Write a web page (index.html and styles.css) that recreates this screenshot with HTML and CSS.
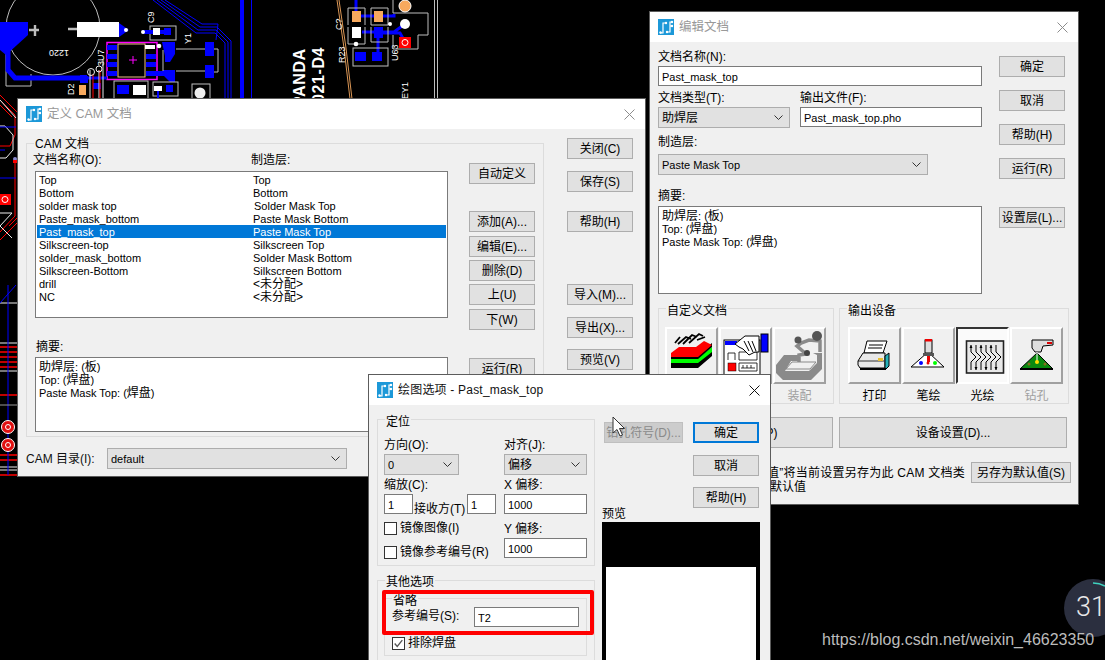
FILE: index.html
```html
<!DOCTYPE html>
<html lang="zh">
<head>
<meta charset="utf-8">
<title>CAM</title>
<link rel="stylesheet" href="styles.css">
</head>
<body>
<svg class="defs" width="0" height="0">
  <symbol id="logo" viewBox="0 0 16 16">
    <rect width="16" height="16" fill="#1c98d8"/>
    <path d="M2 14h3V4h2M9 13h3V3h2M3 14v-1M12 7h2" fill="none" stroke="#fff" stroke-width="1.2"/>
    <circle cx="2.5" cy="13.5" r="1.2" fill="#fff"/><circle cx="8" cy="4" r="1.2" fill="#fff"/>
    <circle cx="9" cy="13" r="1.2" fill="#fff"/><circle cx="14" cy="3" r="1.2" fill="#fff"/>
    <circle cx="14" cy="7" r="1.2" fill="#fff"/>
  </symbol>
  <symbol id="chev" viewBox="0 0 9 5">
    <path d="M.5.5 4.5 4.5 8.5.5" fill="none" stroke="#333" stroke-width="1"/>
  </symbol>
  <symbol id="cross" viewBox="0 0 11 11">
    <path d="M.5.5 10.5 10.5M10.5.5.5 10.5" fill="none" stroke="currentColor" stroke-width="1"/>
  </symbol>
</svg>

<div class="desk">
  <svg class="pcb" width="1105" height="660" viewBox="0 0 1105 660">
    <!-- battery area -->
    <circle cx="53" cy="28" r="47" fill="none" stroke="#bdbdbd"/>
    <path d="M6 30V86H31V74" fill="none" stroke="#bdbdbd"/>
    <path d="M0 22H28V35L6 55 0 50Z" fill="#0000ff"/>
    <path d="M8 50V70L15 78H84" fill="none" stroke="#0000ff" stroke-width="5"/>
    <rect x="80" y="75" width="7" height="8" fill="#0000ff"/>
    <path d="M29 30H39M35 25V36M68 29H77" stroke="#bdbdbd" stroke-width="2.4" fill="none"/>
    <rect x="77" y="22" width="42" height="15" fill="#fff"/>
    <path d="M119 23 129 30 119 37Z" fill="#0000ff"/>
    <circle cx="126" cy="30" r="2" fill="#fff"/>
    <text class="silk" transform="translate(69 50) rotate(180)">1220</text>
    <text class="silk" transform="translate(154 23) rotate(-90)">C9</text>
    <text class="silk" transform="translate(191 44) rotate(-90)">Y1</text>
    <text class="silk" transform="translate(104 66) rotate(-90)">3U7</text>
    <text class="silk" transform="translate(74 95) rotate(-90)">D2</text>
    <!-- C9 -->
    <rect x="150" y="26" width="26" height="14" fill="none" stroke="#bdbdbd"/>
    <path d="M143 32H170" stroke="#0000ff" stroke-width="4"/>
    <circle cx="143" cy="32" r="2" fill="#fff"/>
    <rect x="153" y="28" width="7" height="7" fill="#fff"/>
    <rect x="164" y="28" width="7" height="7" fill="#0000ff"/>
    <!-- U7 -->
    <rect x="107" y="42.500" width="50" height="37" fill="none" stroke="#ff00ff" stroke-width="1.500"/>
    <rect x="118" y="44" width="27" height="33" fill="none" stroke="#f0c088"/>
    <path d="M129 60H137M133 56V64" stroke="#ff00ff"/>
    <g fill="#0000ff">
      <rect x="107" y="45" width="10" height="5"/><rect x="107" y="54" width="10" height="5"/>
      <rect x="107" y="62" width="10" height="5"/><rect x="107" y="71" width="10" height="5"/>
      <rect x="146" y="54" width="10" height="5"/><rect x="146" y="62" width="10" height="5"/>
      <rect x="146" y="71" width="22" height="5"/>
    </g>
    <rect x="145" y="45" width="10" height="4" fill="#fff"/>
    <circle cx="159" cy="46" r="2.300" fill="#fff"/>
    <!-- Y1 -->
    <path d="M162 42H175V54L170 62H165V56ZM163 70H175V82H170L164 76Z" fill="#0000ff"/>
    <path d="M176 49H206M176 71H206M163 50V71M214 49H218V72H214" stroke="#bdbdbd" fill="none"/>
    <rect x="205" y="42" width="9" height="14" fill="#0000ff"/>
    <rect x="205" y="65" width="9" height="13" fill="#0000ff"/>
    <!-- lower pads -->
    <path d="M86 78H107" stroke="#0000ff" stroke-width="3"/>
    <rect x="83" y="76" width="5" height="7" fill="#0000ff"/>
    <rect x="93" y="83" width="8" height="6" fill="#0000ff"/>
    <rect x="79" y="85" width="7" height="10" fill="#f7a95e"/>
    <path d="M90 70V99M99 70V99M103 60V99" stroke="#e8e8e8" fill="none"/>
    <path d="M93 74V99M100 70V99" stroke="#ff0000" fill="none"/>
    <circle cx="91" cy="72" r="3.500" fill="none" stroke="#eee"/>
    <circle cx="99" cy="69" r="3" fill="none" stroke="#eee"/>
    <rect x="114" y="81" width="34" height="18" fill="none" stroke="#bdbdbd"/>
    <rect x="117" y="85" width="12" height="9" fill="#0000ff"/>
    <rect x="133" y="85" width="13" height="10" fill="#fff"/>
    <rect x="153" y="82" width="25" height="14" fill="none" stroke="#bdbdbd"/>
    <rect x="154" y="86" width="8" height="5" fill="#fff"/>
    <rect x="166" y="85" width="7" height="7" fill="#0000ff"/>
    <path d="M158 91V99" stroke="#0000ff" stroke-width="2"/>
    <rect x="192" y="84" width="18" height="20" fill="none" stroke="#bdbdbd"/>
    <circle cx="200" cy="93" r="5.500" fill="#eee"/>
    <!-- bus -->
    <g fill="none" stroke="#0000ff">
      <path d="M153 0 196 33H215L225 43V99"/>
      <path d="M157 0 198 30H216L228 42V99"/>
      <path d="M161 0 200 27H217L231 41V99"/>
      <path d="M165 0 202 24H218L216 40"/>
    </g>
    <rect x="240" y="0" width="4" height="99" fill="#0000ff"/>
    <path d="M251.500 0V99" stroke="#0000ff"/>
    <!-- right board -->
    <path d="M337 0 344 48 350 99M339 0 346 48 352 99" fill="none" stroke="#f4a860" stroke-width=".9"/>
    <text class="silk" transform="translate(342 30) rotate(-90)">C?</text>
    <text class="silk" transform="translate(345 63) rotate(-90)">R23</text>
    <text class="silk" transform="translate(398 61) rotate(-90)">U63</text>
    <text class="silk" transform="translate(408 99) rotate(-90)">EY1</text>
    <text class="mark" transform="translate(305 107) rotate(-90)">PANDA</text>
    <text class="mark" transform="translate(324 103) rotate(-90)">021-D4</text>
    <path d="M356 0V12M352 16H394V14M362 32H394L405 24M380 33H400L405 42M378 36V52" stroke="#0000ff" stroke-width="3" fill="none"/>
    <path d="M348 8H365V25M348 8V25M371 8H388V25H371ZM348 27V44H365V27M371 27V42H388V27" fill="none" stroke="#bdbdbd"/>
    <rect x="352" y="11" width="9" height="11" fill="#f7a95e"/>
    <rect x="374" y="11" width="9" height="11" fill="#f7a95e"/>
    <rect x="352" y="27" width="9" height="11" fill="#fff"/>
    <rect x="374" y="27" width="9" height="11" fill="#0000ff"/>
    <circle cx="356" cy="44" r="2.300" fill="#fff"/>
    <rect x="353" y="48" width="35" height="18" fill="none" stroke="#bdbdbd"/>
    <rect x="355" y="52" width="11" height="9" fill="#0000ff"/>
    <rect x="372" y="52" width="10" height="9" fill="#0000ff"/>
    <path d="M393 0V13H428V35H418V49H393V35" fill="none" stroke="#bdbdbd"/>
    <circle cx="405" cy="6" r="6" fill="#f7a95e" stroke="#fff"/>
    <circle cx="405" cy="24" r="5" fill="#fff"/>
    <circle cx="390" cy="24" r="2" fill="#fff"/>
    <rect x="399" y="37" width="12" height="11" fill="#f00"/>
    <circle cx="405" cy="42.500" r="3" fill="none" stroke="#fff"/>
    <path d="M434.500 0V99M437.500 0V99" stroke="#bdbdbd"/>
    <!-- left sliver -->
    <g fill="none" stroke="#f00">
      <path d="M0 100 15 115V135L10 146H0M0 105 12 117M0 95 18 113"/>
      <path d="M15 162V216L0 232M9 226 18 217M0 240 18 222"/>
      <path d="M0 347H18M0 352H18M0 357H18M0 362H18M0 367H18M0 395H18M0 455H18M0 460H18M0 475H18" stroke-width="1.500"/>
    </g>
    <g fill="none" stroke="#eee">
      <path d="M0 100 16 118M0 126H5L13 135V150L6 158H0M0 213H12L0 226M0 226 12 238"/>
      <path d="M0 303H18M0 343H18M0 371H18M0 467H18M0 470H18"/>
    </g>
    <path d="M0 127H16M0 150H5M0 178H16M8 285V475M0 303 16 285" fill="none" stroke="#0000ff"/>
    <path d="M0 405H18" stroke="#999"/>
    <circle cx="15" cy="159" r="2" fill="#8a8ad0"/>
    <rect x="13" y="160" width="4" height="3" fill="#f00"/>
    <rect x="0" y="194" width="11" height="11" fill="#f00"/>
    <circle cx="5" cy="199.500" r="3" fill="none" stroke="#fff"/>
    <g fill="#e01010" stroke="#fff"><circle cx="8" cy="427" r="6.500"/><circle cx="8" cy="445" r="6.500"/></g>
    <g fill="none" stroke="#fff"><circle cx="8" cy="427" r="2.500"/><circle cx="8" cy="445" r="2.500"/></g>
    <!-- gauge -->
    <circle cx="1093" cy="608" r="29" fill="#2b2f3f"/>
    <path d="M1093 583a25 25 0 0 1 12 3" fill="none" stroke="#3fd2bf" stroke-width="1.500"/>
    <text class="gauge" x="1076" y="616">31</text>
  </svg>

  <section class="win win-cam">
    <header class="title">
      <svg class="logo"><use href="#logo"/></svg>
      <span class="title-text faded">定义 CAM 文档</span>
      <svg class="close faded"><use href="#cross"/></svg>
    </header>
    <div class="cam-main">
      <div class="group cam-group">
        <span class="legend">CAM 文档</span>
        <div class="cam-inner">
          <div class="cam-left">
            <div class="cam-heads"><span>文档名称(O):</span><span>制造层:</span></div>
            <div class="list">
              <div class="row"><span>Top</span><span>Top</span></div>
              <div class="row"><span>Bottom</span><span>Bottom</span></div>
              <div class="row"><span>solder mask top</span><span class="in1">Solder Mask Top</span></div>
              <div class="row"><span>Paste_mask_bottom</span><span>Paste Mask Bottom</span></div>
              <div class="row selected"><span>Past_mask_top</span><span>Paste Mask Top</span></div>
              <div class="row"><span>Silkscreen-top</span><span>Silkscreen Top</span></div>
              <div class="row"><span>solder_mask_bottom</span><span>Solder Mask Bottom</span></div>
              <div class="row"><span>Silkscreen-Bottom</span><span>Silkscreen Bottom</span></div>
              <div class="row"><span>drill</span><span class="cj">&lt;未分配&gt;</span></div>
              <div class="row"><span>NC</span><span class="cj">&lt;未分配&gt;</span></div>
            </div>
            <div class="cam-sum-label">摘要:</div>
            <div class="memo cam-memo"><span class="cj">助焊层</span>: (<span class="cj">板</span>)<br>Top: (<span class="cj">焊盘</span>)<br>Paste Mask Top: (<span class="cj">焊盘</span>)</div>
          </div>
          <div class="btn-col cam-mid">
            <button class="btn">自动定义</button>
            <button class="btn gap-a">添加(A)...</button>
            <button class="btn gap-4">编辑(E)...</button>
            <button class="btn gap-3">删除(D)</button>
            <button class="btn gap-3">上(U)</button>
            <button class="btn gap-4">下(W)</button>
            <button class="btn gap-b">运行(R)</button>
          </div>
        </div>
      </div>
      <div class="btn-col cam-right">
        <button class="btn">关闭(C)</button>
        <button class="btn gap-12">保存(S)</button>
        <button class="btn gap-19">帮助(H)</button>
        <button class="btn gap-52">导入(M)...</button>
        <button class="btn gap-12">导出(X)...</button>
        <button class="btn gap-11">预览(V)</button>
      </div>
    </div>
    <div class="cam-dir">
      <span class="cam-dir-label">CAM 目录(I):</span>
      <div class="select w-240"><span class="lat">default</span><svg class="chev"><use href="#chev"/></svg></div>
    </div>
  </section>

  <section class="win win-edit">
    <header class="title">
      <svg class="logo"><use href="#logo"/></svg>
      <span class="title-text faded">编辑文档</span>
      <svg class="close faded"><use href="#cross"/></svg>
    </header>
    <div class="edit-top">
      <div class="edit-left">
        <label class="lab">文档名称(N):</label>
        <input class="field" value="Past_mask_top">
        <div class="edit-pair">
          <div>
            <label class="lab">文档类型(T):</label>
            <div class="select"><span>助焊层</span><svg class="chev"><use href="#chev"/></svg></div>
          </div>
          <div>
            <label class="lab">输出文件(F):</label>
            <input class="field" value="Past_mask_top.pho">
          </div>
        </div>
        <label class="lab lab-m1">制造层:</label>
        <div class="select w-270 sel-m"><span class="lat">Paste Mask Top</span><svg class="chev"><use href="#chev"/></svg></div>
        <label class="lab lab-m2">摘要:</label>
        <div class="memo edit-memo"><span class="cj">助焊层</span>: (<span class="cj">板</span>)<br>Top: (<span class="cj">焊盘</span>)<br>Paste Mask Top: (<span class="cj">焊盘</span>)</div>
      </div>
      <div class="btn-col edit-right">
        <button class="btn">确定</button>
        <button class="btn gap-13">取消</button>
        <button class="btn gap-13">帮助(H)</button>
        <button class="btn gap-13">运行(R)</button>
        <button class="btn gap-28">设置层(L)...</button>
      </div>
    </div>
    <div class="edit-groups">
      <div class="group g-custom">
        <span class="legend">自定义文档</span>
        <div class="tiles">
          <div class="tile">
            <div class="tile-btn"><svg viewBox="2 2 49 53">
              <path d="M6 35H33L47 24V29L33 41H6Z" fill="#000"/>
              <path d="M6 31H33L47 20V25L33 36H6Z" fill="#00ff00"/>
              <path d="M6 27H33L47 16V20L33 32H6Z" fill="#000"/>
              <path d="M6 26 14 20H31L39 14 47 18 33 30H6Z" fill="#ff0000"/>
              <path d="M13 17 21 10 26 12M18 17 27 8 32 10M24 16 34 7 38 9M15 10 10 16M32 13 40 10" fill="none" stroke="#000" stroke-width="1.800"/>
            </svg></div>
            <span>层</span>
          </div>
          <div class="tile">
            <div class="tile-btn"><svg viewBox="2 2 49 53">
              <rect x="5" y="13" width="36" height="38" fill="#fff" stroke="#000"/>
              <rect x="6" y="14" width="12" height="4" fill="#0000ff"/>
              <rect x="9" y="36" width="8" height="8" fill="#ff0000" stroke="#000" stroke-width=".5"/>
              <path d="M9 33V26H16V33M20 25H38V33H20ZM20 36H38V44H20ZM22 41H36M24 38V41M28 38V41M32 38V41" fill="none" stroke="#000" stroke-width=".8"/>
              <path d="M16 17 26 9H40V25H36L30 28 24 22 20 20Z" fill="#fff" stroke="#000"/>
              <path d="M25 14 30 24M29 14 34 25M33 14 37 24" stroke="#000" fill="none"/>
              <rect x="42" y="7" width="7" height="18" fill="#0000ff" stroke="#000"/>
            </svg></div>
            <span>文档</span>
          </div>
          <div class="tile tile-off">
            <div class="tile-btn"><svg viewBox="2 2 49 53">
              <path d="M3 38 11 28H26V34H18L12 44H36L44 36V28L40 26H49V42L38 53H10L3 46Z" fill="#8a8a8a"/>
              <path d="M13 42 19 35H43L37 42Z" fill="#f0f0f0" stroke="#8a8a8a"/>
              <path d="M26 35V28L33 27 24 19 28 16 36 13 47 14 47 25" fill="none" stroke="#8a8a8a" stroke-width="3.500"/>
              <circle cx="44" cy="9" r="5" fill="#555"/><circle cx="25" cy="13" r="3.500" fill="#555"/><circle cx="34" cy="26" r="3" fill="#444"/>
            </svg></div>
            <span>装配</span>
          </div>
        </div>
      </div>
      <div class="group g-output">
        <span class="legend">输出设备</span>
        <div class="tiles">
          <div class="tile">
            <div class="tile-btn"><svg viewBox="2 2 49 53">
              <path d="M19 14H39L35 26H16Z" fill="#fff" stroke="#000"/>
              <path d="M21 18H35M20 21H34" stroke="#000"/>
              <path d="M10 34 15 26H37V41H12L10 38Z" fill="#e8e8e8" stroke="#000"/>
              <path d="M37 29 41 26V39L37 43Z" fill="#26b0b8" stroke="#000"/>
              <path d="M10 34H36" stroke="#000" stroke-width=".8"/>
              <rect x="30" y="31" width="5" height="3" fill="#e8c030"/>
              <rect x="12" y="41" width="26" height="2" fill="#000"/>
            </svg></div>
            <span>打印</span>
          </div>
          <div class="tile">
            <div class="tile-btn"><svg viewBox="2 2 49 53">
              <path d="M9 40 26 25 42 40Z" fill="#fff" stroke="#000"/>
              <rect x="23" y="13" width="7" height="13" fill="#ddd" stroke="#000"/>
              <rect x="23" y="12" width="7" height="2.500" fill="#e00"/>
              <rect x="21" y="26" width="11" height="3" fill="#555"/>
              <path d="M25 29H28V35H25Z" fill="#e00"/>
              <circle cx="19" cy="36" r="2" fill="#0000ff"/><circle cx="33" cy="36" r="2" fill="#00ff00"/><circle cx="26" cy="36" r="1.500" fill="#e00"/>
            </svg></div>
            <span>笔绘</span>
          </div>
          <div class="tile tile-on">
            <div class="tile-btn"><svg viewBox="2 2 49 53">
              <rect x="10.500" y="14" width="37" height="32" fill="#e8e8e8" stroke="#222" stroke-width="1.600"/>
              <path d="M15 18V25L20 30 15 35V43M20 18V25L25 30 20 35V43M25 18V25L30 30 25 35V43M30 18V25L35 30 30 35V43M35 18V25L40 30 35 35V43M40 18V25L45 30 40 35V43" fill="none" stroke="#000"/>
              <path d="M13.500 21 15 18 16.500 21ZM23.500 21 25 18 26.500 21ZM33.500 21 35 18 36.500 21ZM18.500 40 20 43 21.500 40ZM28.500 40 30 43 31.500 40ZM38.500 40 40 43 41.500 40Z" fill="#000"/>
            </svg></div>
            <span>光绘</span>
          </div>
          <div class="tile tile-off">
            <div class="tile-btn"><svg viewBox="2 2 49 53">
              <path d="M10 42 27 26 43 42Z" fill="#0a8a10" stroke="#000"/>
              <rect x="10" y="41" width="33" height="2" fill="#000"/>
              <path d="M22 13H43V18L33 19 31 25H25L22 21Z" fill="#ddd" stroke="#000"/>
              <rect x="37" y="15" width="5" height="2" fill="#d00"/>
              <path d="M27 25V34" stroke="#fff"/>
              <circle cx="27" cy="35" r="2" fill="#ffe000"/>
              <circle cx="19" cy="37" r="1.500" fill="#8a6a20"/><circle cx="35" cy="37" r="1.500" fill="#8a6a20"/>
            </svg></div>
            <span>钻孔</span>
          </div>
        </div>
      </div>
    </div>
    <div class="edit-wide">
      <button class="btn btn-tall w-175">绘图选项(P)</button>
      <button class="btn btn-tall w-228">设备设置(D)...</button>
    </div>
    <div class="edit-foot">
      <div class="foot-text"><div class="foot-l1">单击“另存为默认值”将当前设置另存为此 CAM 文档类</div><div class="foot-l2">型的设置并可恢复为默认值</div></div>
      <button class="btn w-100">另存为默认值(S)</button>
    </div>
  </section>

  <section class="win win-plot">
    <header class="title">
      <svg class="logo"><use href="#logo"/></svg>
      <span class="title-text plot-title">绘图选项 - Past_mask_top</span>
      <svg class="close"><use href="#cross"/></svg>
    </header>
    <div class="plot-body">
      <div class="plot-left">
        <div class="group g-place">
          <span class="legend">定位</span>
          <div class="place-grid">
            <div class="place-col">
              <label class="lab">方向(O):</label>
              <div class="select w-75"><span class="lat">0</span><svg class="chev"><use href="#chev"/></svg></div>
              <label class="lab lab-scale">缩放(C):</label>
              <div class="scale-row">
                <input class="field w-29" value="1">
                <span class="scale-lab">接收方(T)</span>
                <input class="field w-29" value="1">
              </div>
              <label class="check chk-1"><span class="box"></span>镜像图像(I)</label>
              <label class="check chk-2"><span class="box"></span>镜像参考编号(R)</label>
            </div>
            <div class="place-col">
              <label class="lab">对齐(J):</label>
              <div class="select"><span>偏移</span><svg class="chev"><use href="#chev"/></svg></div>
              <label class="lab lab-scale">X 偏移:</label>
              <input class="field" value="1000">
              <label class="lab lab-y">Y 偏移:</label>
              <input class="field" value="1000">
            </div>
          </div>
        </div>
        <div class="group g-other">
          <span class="legend">其他选项</span>
          <div class="group g-omit">
            <span class="legend">省略</span>
            <div class="ref-row"><span>参考编号(S):</span><input class="field w-105" value="T2"></div>
            <label class="check chk-3"><span class="box box-on"><svg viewBox="0 0 13 13"><path d="M2 6.500 5 10 11 2.500" fill="none" stroke="#555" stroke-width="1.600"/></svg></span>排除焊盘</label>
          </div>
        </div>
      </div>
      <div class="plot-right">
        <div class="plot-actions">
          <button class="btn btn-off w-79">钻孔符号(D)...</button>
          <div class="btn-col">
            <button class="btn btn-default">确定</button>
            <button class="btn gap-12">取消</button>
            <button class="btn gap-11">帮助(H)</button>
          </div>
        </div>
        <div class="prev-label">预览</div>
        <div class="preview"><div class="preview-sheet"></div></div>
      </div>
    </div>
    <div class="redbox"></div>
  </section>

  <svg class="cursor" width="14" height="22" viewBox="0 0 14 22">
    <path d="M1 1V17L5 13.500 8 20 10.500 19 7.500 12.500H12.500Z" fill="#fff" stroke="#333"/>
  </svg>
  <div class="watermark">https://blog.csdn.net/weixin_46623350</div>
</div>
</body>
</html>
```

FILE: styles.css
```css
* { box-sizing: border-box; }
html, body { margin: 0; padding: 0; background: #000; }
body { font: 12px/14px "Liberation Sans", "Noto Sans CJK SC", sans-serif; color: #000; }
.defs { position: absolute; }
.desk { position: relative; width: 1105px; height: 660px; overflow: hidden; background: #000; }
.pcb { position: absolute; left: 0; top: 0; }
.silk { font: 9px "Liberation Sans", sans-serif; fill: #fff; }
.mark { font: bold 16px "Liberation Sans", sans-serif; fill: #fff; letter-spacing: .6px; }
.gauge { font: 300 27px Roboto, sans-serif; fill: #e8e8e8; }
.cj { font-size: 12px; }
.lat { font-size: 11px; }
.in1 { padding-left: 1px; }

/* windows on the desktop */
.win { position: absolute; background: #f0f0f0; box-shadow: 0 0 0 1px #5c5c5c; overflow: hidden; }
.win-cam { left: 18px; top: 99px; width: 627px; height: 377px; }
.win-edit { left: 650px; top: 12px; width: 428px; height: 492px; }
.win-plot { left: 369px; top: 375px; width: 401px; height: 285px; }

.title { display: flex; align-items: center; height: 30px; padding: 0 10px 0 8px; background: #fff; }
.logo { width: 16px; height: 16px; flex: none; }
.title-text { margin-left: 5px; font-size: 12.500px; }
.faded { color: #999; }
.plot-title { color: #111; letter-spacing: .2px; font-size: 12px; }
.close { width: 11px; height: 11px; margin-left: auto; color: #111; }
.close.faded { color: #8c8c8c; }

/* controls */
.btn {
  display: block; width: 100%; height: 21px; padding: 1px 0 0; white-space: nowrap;
  font: inherit; color: #000; background: #e1e1e1; border: 1px solid #adadad; border-radius: 0;
}
.btn-col { display: flex; flex-direction: column; width: 66px; flex: none; }
.btn-tall { height: 31px; }
.btn-off { background: #cccccc; color: #8a8a8a; border-color: #bfbfbf; }
.btn-default { border: 2px solid #0078d7; }
.gap-3 { margin-top: 3px; } .gap-4 { margin-top: 4px; } .gap-11 { margin-top: 11px; }
.gap-12 { margin-top: 12px; } .gap-13 { margin-top: 13px; } .gap-19 { margin-top: 19px; }
.gap-28 { margin-top: 28px; } .gap-52 { margin-top: 52px; }
.gap-a { margin-top: 27px; } .gap-b { margin-top: 28px; }

.field {
  display: block; width: 100%; height: 20px; padding: 1px 3px 0; margin: 0;
  font: 11px/14px "Liberation Sans", sans-serif; color: #000; background: #fff; border: 1px solid #7a7a7a; border-radius: 0; outline: 0;
}
.select {
  display: flex; align-items: center; justify-content: space-between;
  height: 21px; padding: 0 3px 0 3px; background: #e1e1e1; border: 1px solid #adadad;
}
.chev { width: 9px; height: 5px; margin-right: 3px; }
.memo { padding: 3px 3px 2px; font-size: 11px; line-height: 13px; background: #fff; border: 1px solid #7a7a7a; }
.lab { display: block; height: 14px; }

.group { position: relative; display: flex; flex-direction: column; border: 1px solid #dcdcdc; }
.legend { align-self: flex-start; height: 14px; margin: -5px 0 0 7px; padding: 0 1px; background: #f0f0f0; flex: none; }
.cam-group > .legend { margin-top: -7px; }
.g-other > .legend { margin-top: -6px; }

.check { display: flex; align-items: center; height: 14px; }
.box { display: block; width: 13px; height: 13px; margin-right: 3px; background: #fff; border: 1px solid #333; flex: none; }
.box svg { display: block; width: 11px; height: 11px; }

/* CAM */
.cam-main { display: flex; align-items: flex-start; padding-left: 8px; }
.cam-group { width: 518px; height: 294px; margin-top: 14px; flex: none; }
.cam-inner { display: flex; padding-left: 8px; margin-top: -8px; }
.cam-left { width: 413px; flex: none; }
.cam-heads { display: grid; grid-template-columns: 218px 1fr; height: 14px; margin: 10px 0 4px -2px; }
.list { height: 147px; padding-top: 1px; background: #fff; border: 1px solid #7a7a7a; }
.row { display: grid; grid-template-columns: 214px 1fr; height: 13px; padding-left: 2px; margin-left: 1px; width: 409px; font-size: 11px; line-height: 15px; }
.row.selected { background: #0078d7; color: #fff; }
.cam-sum-label { height: 14px; margin: 22px 0 3px 1px; }
.cam-memo { height: 75px; }
.cam-mid { margin: 20px 0 0 21px; }
.cam-right { margin: 9px 0 0 23px; }
.cam-dir { display: flex; align-items: center; padding: 11px 0 0 8px; }
.cam-dir-label { width: 81px; color: #111; }
.w-240 { width: 240px; }

/* Edit */
.edit-top { display: flex; padding-left: 8px; }
.edit-left { width: 324px; padding-top: 8px; flex: none; }
.edit-left > .lab:first-child { margin-bottom: 2px; }
.edit-pair { display: grid; grid-template-columns: 132px 182px; column-gap: 10px; margin-top: 5px; }
.edit-pair .lab { margin-bottom: 2px; }
.lab-m1 { margin-top: 7px; }
.sel-m { margin-top: 5px; }
.lab-m2 { margin-top: 14px; }
.w-270 { width: 270px; }
.edit-memo { height: 88px; margin-top: 3px; }
.edit-right { margin: 14px 0 0 17px; }
.edit-groups { display: flex; column-gap: 5px; padding: 14px 0 0 8px; }
.g-custom { width: 176px; height: 96px; }
.g-output { width: 230px; height: 96px; }
.tiles { display: flex; column-gap: 1px; margin-top: 9px; padding-left: 6px; }
.g-output .tiles { padding-left: 8px; }
.tile { display: flex; flex-direction: column; align-items: center; width: 53px; }
.tile-btn { width: 53px; height: 57px; margin-bottom: 5px; background: #f0f0f0; border: 2px solid; border-color: #fff #a0a0a0 #a0a0a0 #fff; }
.tile-btn svg { display: block; width: 49px; height: 53px; }
.tile-on .tile-btn { background: #fafafa; border-color: #333 #fff #fff #333; }
.tile-off span { color: #a0a0a0; }
.edit-wide { display: flex; column-gap: 6px; padding: 13px 0 0 8px; }
.w-175 { width: 175px; } .w-228 { width: 228px; }
.edit-foot { display: flex; align-items: flex-start; padding: 14px 0 0 8px; }
.foot-text { width: 307px; margin-right: 6px; padding-top: 4px; line-height: 14px; white-space: nowrap; }
.foot-l1 { text-align: right; letter-spacing: .25px; }
.foot-l2 { padding-left: 4px; }
.w-100 { width: 100px; flex: none; }

/* Plot */
.plot-body { display: flex; align-items: flex-start; }
.plot-left { width: 218px; margin: 14px 0 0 8px; flex: none; }
.g-place { height: 147px; }
.place-grid { display: grid; grid-template-columns: 112px 83px; column-gap: 8px; padding-left: 6px; margin-top: 9px; }
.place-col { display: flex; flex-direction: column; }
.place-col .lab { margin-bottom: 2px; }
.w-75 { width: 75px; }
.lab-scale { margin-top: 3px; }
.scale-row { display: flex; align-items: flex-end; }
.w-29 { width: 29px; flex: none; }
.scale-lab { width: 54px; margin: 0 0 -2px 1px; white-space: nowrap; }
.chk-1 { margin-top: 7px; }
.chk-2 { margin-top: 10px; }
.lab-y { margin-top: 8px; }
.g-other { height: 100px; margin-top: 14px; }
.g-omit { width: 203px; height: 58px; margin: 9px 0 0 6px; }
.ref-row { display: flex; align-items: flex-start; margin-top: -1px; padding-left: 7px; }
.ref-row span { width: 82px; margin-top: 2px; }
.w-105 { width: 105px; }
.chk-3 { margin: 9px 0 0 7px; }
.plot-right { width: 158px; margin: 17px 0 0 7px; flex: none; }
.plot-actions { display: flex; align-items: flex-start; column-gap: 10px; padding-left: 2px; }
.w-79 { width: 79px; flex: none; }
.prev-label { height: 12px; line-height: 12px; margin-bottom: 2px; }
.preview { height: 140px; padding: 45px 4px 0; background: #000; }
.preview-sheet { height: 100px; background: #fff; }

/* overlays */
.redbox { position: absolute; left: 13px; top: 215px; width: 212px; height: 45px; border: 4px solid #f00; border-radius: 2px; }
.cursor { position: absolute; left: 612px; top: 416px; }
.watermark { position: absolute; left: 822px; top: 631px; font: 16px/18px "Liberation Sans", sans-serif; color: #bcbcbc; white-space: nowrap; }
```
